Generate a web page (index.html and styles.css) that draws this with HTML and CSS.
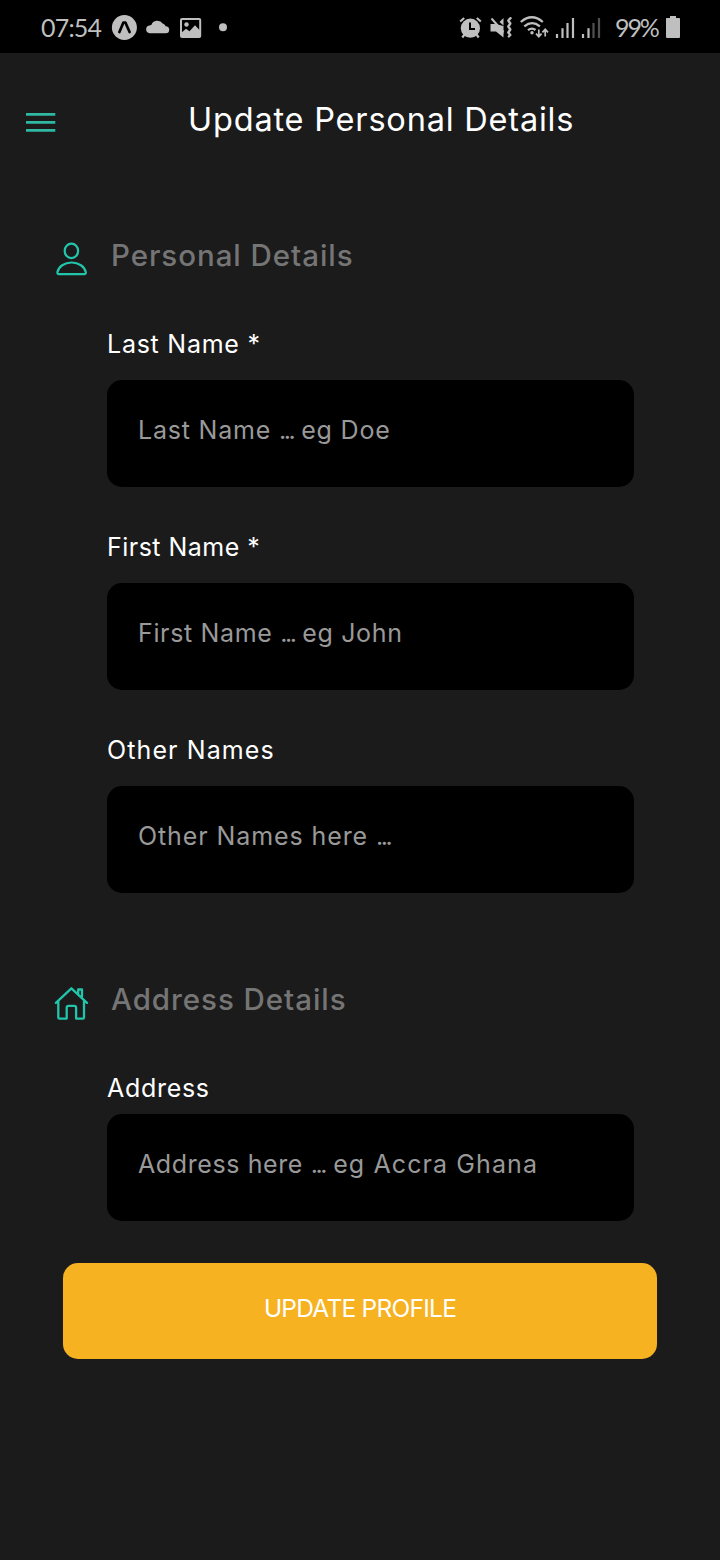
FILE: index.html
```
<!DOCTYPE html>
<html lang="en">
<head>
<meta charset="utf-8">
<title>Update Personal Details</title>
<link rel="stylesheet" href="styles.css">
</head>
<body>
<div class="status">
  <span class="time">07:54</span>
  <svg class="status-left" width="120" height="53" viewBox="110 0 120 53">
    <circle cx="124.400" cy="27.500" r="12.500" fill="#bfbfbf"/>
    <path d="M119.400 32 123.400 22.500h2l4.200 9.500" fill="none" stroke="#000" stroke-width="2.700" stroke-linecap="round" stroke-linejoin="round"/>
    <path d="M149.600 33.200a3.900 3.900 0 0 1-.3-7.700 4 4 0 0 1 2-.5 6.400 6.400 0 0 1 11.400-1.400 4.600 4.600 0 0 1 3 2.600 3.500 3.500 0 0 1 0 7z" fill="#bfbfbf"/>
    <rect x="181" y="19" width="19.200" height="18" rx="1" fill="none" stroke="#bfbfbf" stroke-width="2"/>
    <circle cx="186.500" cy="24.500" r="2.200" fill="#bfbfbf"/>
    <path d="M181 33l5-4.300 3.500 2.600 5.500-6 5.500 5.700V37H181z" fill="#bfbfbf"/>
    <circle cx="223" cy="27.300" r="4" fill="#bfbfbf"/>
  </svg>
  <svg class="status-right" width="150" height="53" viewBox="455 0 150 53" fill="none" stroke="#bfbfbf">
    <circle cx="470.400" cy="28.200" r="9.600" fill="#bfbfbf" stroke="none"/>
    <path d="M460.200 21.500l4-3.500M480.800 21.500l-4-3.500M464.500 34.500l-2.200 3M476.500 34.500l2.200 3" stroke-width="2.200"/>
    <path d="M470 22.500v6.500h5" stroke="#000" stroke-width="2"/>
    <path d="M490.500 24h5l8 8.500v5l-7.500-6h-5.500z" fill="#bfbfbf" stroke="none"/>
    <path d="M495 24l8.500 2v8z" fill="#bfbfbf" stroke="none"/>
    <path d="M499.500 22l4-4v7.500z" fill="#bfbfbf" stroke="none"/>
    <path d="M491.500 18.500l12 13.500" stroke-width="2"/>
    <path d="M510.500 18.200l-2.200 2.300 2 3-2 3 2 3-2 3 2 2.500-1.500 1.500" stroke-width="2.400" stroke-linejoin="round" stroke-linecap="round"/>
    <path d="M520.800 22q11-9.500 22 0M524.300 26.300q7.800-6.300 15.600 0M528 30.200q4-3 7.500-.2" stroke-width="2.300"/>
    <circle cx="532" cy="32.700" r="1.700" fill="#bfbfbf" stroke="none"/>
    <path d="M538.800 29.500v7M536 33.700l2.800 3 2.800-3M545.200 36.500v-7M542.400 32.300l2.800-3 2.800 3" stroke-width="1.700"/>
    <path d="M557 34v4M562.500 28.300V38M567.500 23v15M573 18v20M583 34v4M588.500 28.300V38" stroke-width="2.200"/>
    <path d="M593.500 23v15M599 18v20" stroke="#505050" stroke-width="2.200"/>
  </svg>
  <span class="percent">99%</span>
  <svg class="battery" width="14" height="22" viewBox="0 0 14 22"><path d="M4 0h6v2h3.200q.8 0 .8.800V21q0 1-1 1H1q-1 0-1-1V2.800Q0 2 .8 2H4z" fill="#bfbfbf"/></svg>
</div>
<header class="header">
  <svg class="menu" width="30" height="20" viewBox="0 0 30 20"><path d="M0 2.300h29.300M0 10.300h29.300M0 18.300h29.300" stroke="#30b8a2" stroke-width="2.700"/></svg>
  <h1 class="title">Update Personal Details</h1>
</header>
<main class="form">
  <section class="section">
    <div class="section-head">
      <svg class="section-icon" width="36" height="36" viewBox="0 0 36 36" fill="none" stroke="#22c5aa" stroke-width="2.200"><ellipse cx="17.400" cy="9.900" rx="6.700" ry="7.200"/><path d="M4.900 33.100q-1.800 0-1.500-1.800C4.500 25.500 10.500 21.500 17.600 21.500S30.700 25.500 31.800 31.300q.3 1.800-1.500 1.800z"/></svg>
      <h2 class="heading">Personal Details</h2>
    </div>
    <label class="field"><span class="label last">Last Name *</span><span class="input"><span class="hint last-hint">Last Name <span class="dots">...</span> eg Doe</span></span></label>
    <label class="field"><span class="label first">First Name *</span><span class="input"><span class="hint first-hint">First Name <span class="dots">...</span> eg John</span></span></label>
    <label class="field"><span class="label other">Other Names</span><span class="input"><span class="hint other-hint">Other Names here <span class="dots">...</span></span></span></label>
  </section>
  <section class="section section-address">
    <div class="section-head">
      <svg class="section-icon" width="36" height="36" viewBox="0 0 36 36" fill="none" stroke="#22c5aa" stroke-width="2.300" stroke-linejoin="round" stroke-linecap="round"><path d="M1.900 17.900 17.400 3.300 33 17.900M4.300 16V32.400q0 1.200 1.200 1.200H12.700V22.700q0-1.800 1.800-1.800h5.800q1.800 0 1.800 1.800V33.600h6.700q1.200 0 1.200-1.200V16M24.200 8.500V4.500h3.800v7.800"/></svg>
      <h2 class="heading">Address Details</h2>
    </div>
    <label class="field field-tight"><span class="label address">Address</span><span class="input"><span class="hint address-hint">Address here <span class="dots">...</span><span class="example"> eg Accra Ghana</span></span></span></label>
  </section>
</main>
<button class="submit" type="button">UPDATE PROFILE</button>
</body>
</html>
```
FILE: styles.css
```
* { box-sizing: border-box; }
body { margin: 0; min-height: 1560px; background: #1b1b1b; color: #fff; font-family: Inter, "Liberation Sans", sans-serif; white-space: nowrap; }
svg { display: block; flex: none; }
.status { display: flex; align-items: center; height: 53px; padding: 0 40px 0 41px; background: #000; color: #bfbfbf; }
.time { width: 69px; font: 25px/50px Lato, sans-serif; letter-spacing: -0.8px; }
.status-right { margin-left: auto; }
.percent { width: 50px; margin: 1px 0 0 10px; font: 25px/50px Lato, sans-serif; letter-spacing: -2.100px; }
.battery { margin-left: 1px; }
.header { display: flex; align-items: center; height: 132px; padding: 0 26px; }
.menu { margin-top: 5px; }
.title { margin: 1px 0 0 132px; font-size: 32.500px; font-weight: 400; line-height: 40px; letter-spacing: 0.800px; }
.form { padding: 51px 86px 0 54px; }
.section-head { display: flex; align-items: center; height: 40px; }
.section-icon { margin-top: 5px; }
.heading { margin: 0 0 2px 21px; color: #757575; font-size: 29.500px; font-weight: 500; line-height: 40px; letter-spacing: 0.950px; }
.section-head + .field { margin-top: 53px; }
.section-address { margin-top: 87px; }
.field { display: block; margin: 45px 0 0 53px; }
.label { display: block; height: 51px; font-size: 25px; line-height: 30px; }
.last { letter-spacing: 0.750px; }
.first { letter-spacing: 0.480px; }
.other { letter-spacing: 1.100px; }
.address { letter-spacing: 0.700px; }
.field-tight .label { height: 41px; }
.input { display: flex; align-items: center; height: 107px; padding: 0 30px 7px 31px; border-radius: 15px; background: #000; color: #999; font-size: 25px; line-height: 30px; }
.last-hint { letter-spacing: 0.800px; }
.first-hint { letter-spacing: 0.650px; }
.other-hint { letter-spacing: 0.900px; }
.address-hint { letter-spacing: 0.600px; }
.dots { letter-spacing: -2.400px; }
.example { letter-spacing: 1.100px; }
.submit { display: block; width: 594px; height: 96px; margin: 42px 0 0 63px; padding: 0 0 6px; border: 0; border-radius: 15px; background: #f6b221; color: #fff; font: 24.500px/30px Inter, sans-serif; letter-spacing: -0.750px; text-align: center; }
```
